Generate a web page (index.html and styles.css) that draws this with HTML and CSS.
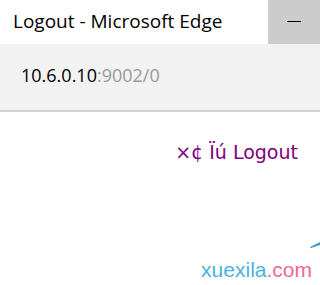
FILE: index.html
```html
<!DOCTYPE html>
<html>
<head>
<meta charset="utf-8">
<link rel="stylesheet" href="styles.css">
</head>
<body>
<div class="window">
  <div class="titlebar">
    <div class="title">Logout - Microsoft Edge</div>
    <div class="minbtn"><span class="dash"></span></div>
  </div>
  <div class="addressbar">
    <span class="host">10.6.0.10</span><span class="rest">:9002/0</span>
  </div>
  <div class="content">
    <a class="link" href="#">×¢ Ïú Logout</a>
    <svg class="mark" width="10" height="8" viewBox="0 0 10 8"><path d="M0 6 L9 1.5 L10 1 L10 4 L1 7 Z" fill="#3a9fc4"/></svg>
    <div class="watermark"><span class="wm-blue">xuexila</span><span class="wm-pink">.com</span></div>
  </div>
</div>
</body>
</html>
```
FILE: styles.css
```css
html, body {
  margin: 0;
  padding: 0;
  background: #ffffff;
}
.window {
  width: 320px;
  height: 285px;
  overflow: hidden;
  font-family: "Open Sans", "Noto Sans", sans-serif;
  display: flex;
  flex-direction: column;
}
.titlebar {
  height: 44px;
  display: flex;
  align-items: stretch;
  background: #ffffff;
}
.title {
  flex: 1;
  padding-left: 13px;
  font-size: 19px;
  line-height: 42px;
  color: #000;
}
.minbtn {
  width: 52px;
  background: #cccccc;
  display: flex;
  align-items: center;
  justify-content: center;
}
.dash {
  display: block;
  width: 14px;
  height: 1px;
  background: #000;
  margin-top: -2px;
}
.addressbar {
  height: 66px;
  background: #f2f2f2;
  border-bottom: 2px solid #d2d2d2;
  padding-left: 21px;
  font-size: 18px;
  line-height: 62px;
}
.host { color: #000; }
.rest { color: #9a9a9a; }
.content {
  flex: 1;
  position: relative;
  padding-top: 28px;
  text-align: right;
  padding-right: 22px;
}
.link {
  font-family: "DejaVu Sans", Verdana, sans-serif;
  font-size: 19px;
  color: #800080;
  text-decoration: none;
  line-height: 24px;
}
.watermark {
  position: absolute;
  right: 8px;
  bottom: 2px;
  font-size: 21px;
  line-height: 26px;
  font-family: "Liberation Sans", Arial, sans-serif;
}
.mark {
  position: absolute;
  right: 0;
  top: 129px;
}
.wm-blue { color: #4db2e2; }
.wm-pink { color: #f2649e; }
```
